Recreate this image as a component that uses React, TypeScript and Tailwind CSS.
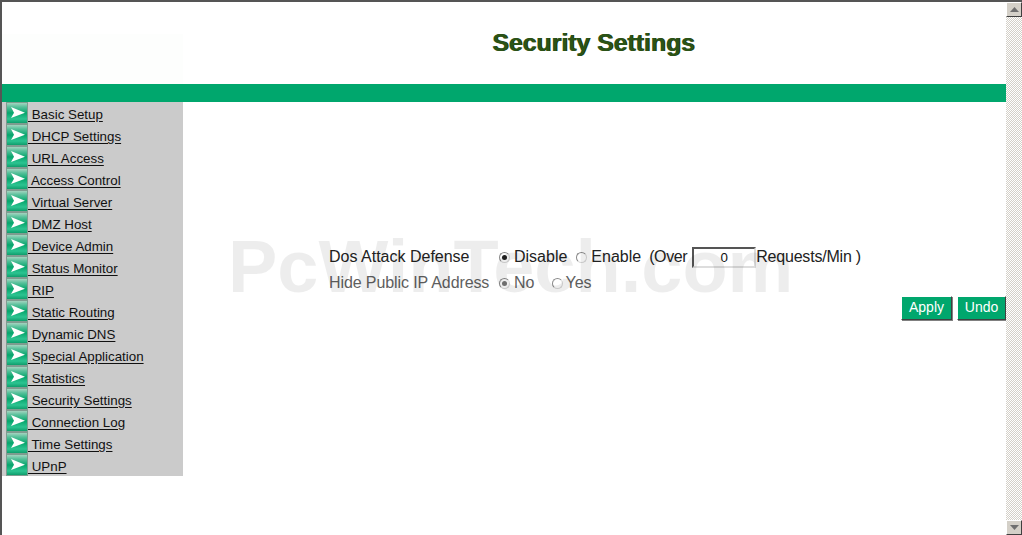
const menu = [
  "Basic Setup",
  "DHCP Settings",
  "URL Access",
  "Access Control",
  "Virtual Server",
  "DMZ Host",
  "Device Admin",
  "Status Monitor",
  "RIP",
  "Static Routing",
  "Dynamic DNS",
  "Special Application",
  "Statistics",
  "Security Settings",
  "Connection Log",
  "Time Settings",
  "UPnP",
];

function ArrowIcon({ id }: { id: string }) {
  return (
    <svg width="22" height="22" viewBox="0 0 22 22" className="shrink-0 block">
      <defs>
        <linearGradient id={id} x1="0" y1="0" x2="0" y2="1">
          <stop offset="0" stopColor="#a3d4c0" />
          <stop offset="0.2" stopColor="#56c09a" />
          <stop offset="0.5" stopColor="#06a56c" />
          <stop offset="0.8" stopColor="#2cc491" />
          <stop offset="1" stopColor="#0f9d6c" />
        </linearGradient>
      </defs>
      <rect x="0" y="0" width="22" height="22" fill="#7f9c90" />
      <rect x="1" y="1" width="20" height="20" fill={`url(#${id})`} />
      <path d="M5 5 L19 10.7 L5 16 L8 10.7 Z" fill="#ffffff" />
    </svg>
  );
}

function Radio({ checked, dim, className = "" }: { checked?: boolean; dim?: boolean; className?: string }) {
  return (
    <span
      className={`inline-flex w-[11px] h-[11px] shrink-0 items-center justify-center rounded-full border border-[#8a8a8a] border-r-[#d8d8d8] border-b-[#d8d8d8] bg-white ${className}`}
    >
      {checked && <span className={`w-[5px] h-[5px] rounded-full ${dim ? "bg-[#777]" : "bg-[#222]"}`} />}
    </span>
  );
}

function GreenButton({ label, width }: { label: string; width: string }) {
  return (
    <button
      className={`${width} h-6 pb-[2px] bg-[#00a76d] text-white text-sm border border-t-white border-l-white border-r-[#404040] border-b-[#404040] shadow-[1px_1px_0_#808080]`}
    >
      {label}
    </button>
  );
}

export default function App() {
  return (
    <div className="relative flex w-[1022px] h-[535px] overflow-hidden bg-white border-l-2 border-t-2 border-[#555] font-['Liberation_Sans',Arial,sans-serif] text-[#222]">
      <div className="flex flex-col w-[1004px]">
        {/* header */}
        <div className="flex h-[82px] shrink-0">
          <div className="w-[181px] mt-[32px] h-[50px] bg-[#fdfefd]" />
          <h1 className="flex-1 pt-[26px] pl-[309px] text-[24.8px] leading-[30px] font-bold text-[#2b5316] [text-shadow:1px_0_0_#1c3a0c]">
            Security Settings
          </h1>
        </div>
        <div className="h-[18px] shrink-0 bg-[#00a76d]" />

        <div className="flex flex-1">
          {/* side menu */}
          <ul className="w-[181px] h-[374px] shrink-0 bg-[#cbcbcb] pl-1">
            {menu.map((item, i) => (
              <li key={item} className="flex h-[22px] text-[13.33px] leading-[22px]">
                <ArrowIcon id={`arrow-${i}`} />
                <a className="pt-[2px] text-[#111] underline underline-offset-2 whitespace-pre">
                  {" " + item}
                </a>
              </li>
            ))}
          </ul>

          {/* form */}
          <div className="flex-1 flex flex-col pt-[142px] text-base">
            <div className="flex items-center h-[26px] pl-[146px]">
              <span className="w-[170px]">Dos Attack Defense</span>
              <Radio checked />
              <span className="ml-1">Disable</span>
              <Radio className="ml-[9px]" />
              <span className="ml-1">Enable</span>
              <span className="ml-2 w-[41px] tracking-[-0.4px]">(Over</span>
              <input
                readOnly
                value="0"
                className="w-[64px] h-[21px] ml-[2px] text-center text-[13.33px] text-[#111] border-2 border-t-[#555] border-l-[#555] border-r-[#ddd] border-b-[#ddd]"
              />
              <span className="tracking-[-0.2px]">Requests/Min )</span>
            </div>
            <div className="flex items-center h-[26px] pl-[146px] text-[#5f5f5f]">
              <span className="w-[170px] tracking-[-0.1px]">Hide Public IP Address</span>
              <Radio checked dim />
              <span className="ml-1">No</span>
              <Radio className="ml-[18px]" />
              <span className="ml-[2px]">Yes</span>
            </div>
            <div className="flex justify-end gap-[5px]">
              <GreenButton label="Apply" width="w-[51px]" />
              <GreenButton label="Undo" width="w-[49px]" />
            </div>
          </div>
        </div>
      </div>

      {/* scrollbar */}
      <div className="flex flex-col w-4 shrink-0 bg-[repeating-conic-gradient(#d4d0c8_0_25%,#ffffff_0_50%)] bg-[length:2px_2px]">
        <div className="flex items-center justify-center h-[15px] bg-[#d4d0c8] border border-t-white border-l-white border-r-[#404040] border-b-[#404040]">
          <svg width="9" height="6" viewBox="0 0 9 6"><path d="M4.5 0 L9 5 L0 5 Z" fill="#6f6f6f" /></svg>
        </div>
        <div className="flex-1" />
        <div className="flex items-center justify-center h-[15px] bg-[#d4d0c8] border border-t-white border-l-white border-r-[#404040] border-b-[#404040]">
          <svg width="9" height="6" viewBox="0 0 9 6"><path d="M0 0 L9 0 L4.5 5 Z" fill="#6f6f6f" /></svg>
        </div>
      </div>

      {/* watermark */}
      <div className="absolute left-[226px] top-[229px] text-[74px] leading-[72px] font-bold text-black/[0.07] pointer-events-none whitespace-nowrap">
        PcWinTech.com
      </div>
    </div>
  );
}
